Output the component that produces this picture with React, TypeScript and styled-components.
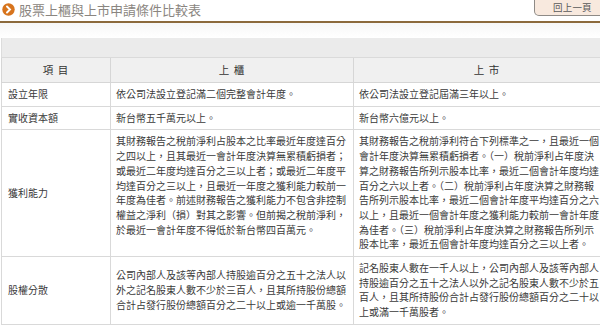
import React from 'react';
import styled, { createGlobalStyle } from 'styled-components';

const FONT = `"Noto Sans CJK TC", "Noto Sans", sans-serif`;

const GlobalStyle = createGlobalStyle`
  html, body {
    margin: 0;
    padding: 0;
    background: #fff;
    overflow: hidden;
  }
  body {
    font-family: ${FONT};
  }
`;

const Page = styled.div`
  width: 600px;
  height: 325px;
  overflow: hidden;
`;

const TopBar = styled.div`
  display: flex;
  justify-content: space-between;
  align-items: flex-start;
  height: 21px;
  border-bottom: 2px solid #8c6a3c;
`;

const Title = styled.div`
  display: flex;
  align-items: center;
  gap: 4px;
  margin: 2px 0 0 2px;
`;

const TitleText = styled.span`
  font-family: ${FONT};
  font-size: 13px;
  line-height: 15px;
  color: #8a8580;
  white-space: nowrap;
`;

const BackButton = styled.button`
  width: 70px;
  height: 16px;
  margin-right: -4px;
  padding: 0 0 1px 18px;
  border: 1px solid #8e8a86;
  border-top: none;
  border-radius: 0 0 0 5px;
  background: #f8e9de;
  font-family: ${FONT};
  font-size: 9.5px;
  line-height: 14px;
  color: #5a5a5a;
  text-align: left;
  letter-spacing: 0.2px;
`;

const Spacer = styled.div`
  height: 15px;
  background: linear-gradient(#f7f7f7, #ffffff);
`;

const TableWrap = styled.div`
  padding-left: 1px;
  overflow: hidden;
`;

const Table = styled.table`
  width: 620px;
  border-collapse: collapse;
  table-layout: fixed;
  font-family: ${FONT};
  font-size: 10px;
  line-height: 14.7px;
  color: #3a3a3a;
`;

const Band = styled.td`
  height: 19px;
  padding: 0;
  background: #ebebeb;
  border-left: 1px solid #dcdcdc;
  border-bottom: 1px solid #dadada;
`;

const HeadCell = styled.th`
  height: 24px;
  padding: 0;
  background: #f0f0f0;
  border: 1px solid #d6d6d6;
  border-top: none;
  font-weight: 400;
  font-size: 10.5px;
  text-align: center;
  color: #333;
  letter-spacing: 1px;
`;

const Cell = styled.td<{ $top?: boolean }>`
  padding: 4px 0 4px 5px;
  border: 1px solid #d9d9d9;
  border-top: none;
  vertical-align: ${p => (p.$top ? 'top' : 'middle')};
  white-space: nowrap;
  overflow: hidden;
`;

const Label = styled(Cell)`
  padding-left: 6px;
`;

const Icon = () => (
  <svg width="13" height="13" viewBox="0 0 13 13">
    <circle cx="6.5" cy="6.5" r="6.2" fill="#d7741d" />
    <path d="M5 3.5 L8 6.5 L5 9.5" fill="none" stroke="#fff" strokeWidth="1.9" strokeLinecap="round" />
  </svg>
);

type Row = { label: string; otc: string[]; twse: string[]; top?: boolean };

const rows: Row[] = [
  {
    label: '設立年限',
    otc: ['依公司法設立登記滿二個完整會計年度。'],
    twse: ['依公司法設立登記屆滿三年以上。'],
  },
  {
    label: '實收資本額',
    otc: ['新台幣五千萬元以上。'],
    twse: ['新台幣六億元以上。'],
  },
  {
    label: '獲利能力',
    otc: [
      '其財務報告之稅前淨利占股本之比率最近年度達百分',
      '之四以上，且其最近一會計年度決算無累積虧損者；',
      '或最近二年度均達百分之三以上者；或最近二年度平',
      '均達百分之三以上，且最近一年度之獲利能力較前一',
      '年度為佳者。前述財務報告之獲利能力不包含非控制',
      '權益之淨利（損）對其之影響。但前揭之稅前淨利，',
      '於最近一會計年度不得低於新台幣四百萬元。',
    ],
    twse: [
      '其財務報告之稅前淨利符合下列標準之一，且最近一個',
      '會計年度決算無累積虧損者。（一）稅前淨利占年度決',
      '算之財務報告所列示股本比率，最近二個會計年度均達',
      '百分之六以上者。（二）稅前淨利占年度決算之財務報',
      '告所列示股本比率，最近二個會計年度平均達百分之六',
      '以上，且最近一個會計年度之獲利能力較前一會計年度',
      '為佳者。（三）稅前淨利占年度決算之財務報告所列示',
      '股本比率，最近五個會計年度均達百分之三以上者。',
    ],
    top: true,
  },
  {
    label: '股權分散',
    otc: [
      '公司內部人及該等內部人持股逾百分之五十之法人以',
      '外之記名股東人數不少於三百人，且其所持股份總額',
      '合計占發行股份總額百分之二十以上或逾一千萬股。',
    ],
    twse: [
      '記名股東人數在一千人以上，公司內部人及該等內部人',
      '持股逾百分之五十之法人以外之記名股東人數不少於五',
      '百人，且其所持股份合計占發行股份總額百分之二十以',
      '上或滿一千萬股者。',
    ],
  },
];

const Lines = ({ lines }: { lines: string[] }) => (
  <>
    {lines.map((l, i) => (
      <React.Fragment key={i}>
        {i > 0 && <br />}
        {l}
      </React.Fragment>
    ))}
  </>
);

export default function App() {
  return (
    <Page>
      <GlobalStyle />
      <TopBar>
        <Title>
          <Icon />
          <TitleText>股票上櫃與上市申請條件比較表</TitleText>
        </Title>
        <BackButton>回上一頁</BackButton>
      </TopBar>
      <Spacer />
      <TableWrap>
        <Table>
          <colgroup>
            <col style={{ width: 109 }} />
            <col style={{ width: 243 }} />
            <col />
          </colgroup>
          <thead>
            <tr>
              <Band colSpan={3} />
            </tr>
            <tr>
              <HeadCell>項 目</HeadCell>
              <HeadCell>上 櫃</HeadCell>
              <HeadCell>上 市</HeadCell>
            </tr>
          </thead>
          <tbody>
            {rows.map(r => (
              <tr key={r.label}>
                <Label>{r.label}</Label>
                <Cell $top={r.top}>
                  <Lines lines={r.otc} />
                </Cell>
                <Cell>
                  <Lines lines={r.twse} />
                </Cell>
              </tr>
            ))}
          </tbody>
        </Table>
      </TableWrap>
    </Page>
  );
}
